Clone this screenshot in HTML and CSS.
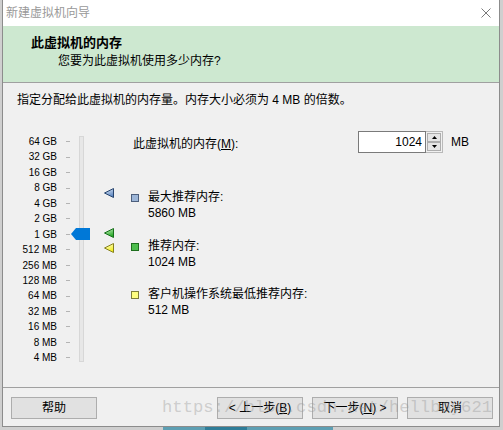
FILE: index.html
```html
<!DOCTYPE html>
<html lang="zh-CN">
<head>
<meta charset="utf-8">
<title>新建虚拟机向导</title>
<link rel="stylesheet" href="styles.css">
</head>
<body>
<div class="window">
  <div class="titlebar">
    <span class="title">新建虚拟机向导</span>
    <svg class="close" width="10" height="10" viewBox="0 0 10 10"><path d="M0.5 0.5 L9.5 9.5 M9.5 0.5 L0.5 9.5" stroke="#7a7a7a" stroke-width="1" fill="none"/></svg>
  </div>
  <div class="header">
    <div class="h-title">此虚拟机的内存</div>
    <div class="h-sub">您要为此虚拟机使用多少内存?</div>
  </div>
  <div class="content">
    <p class="intro">指定分配给此虚拟机的内存量。内存大小必须为 4 MB 的倍数。</p>
    <div class="main">
      <ul class="labels">
        <li>64 GB</li><li>32 GB</li><li>16 GB</li><li>8 GB</li><li>4 GB</li><li>2 GB</li><li>1 GB</li>
        <li>512 MB</li><li>256 MB</li><li>128 MB</li><li>64 MB</li><li>32 MB</li><li>16 MB</li><li>8 MB</li><li>4 MB</li>
      </ul>
      <div class="ticks">
        <span></span><span></span><span></span><span></span><span></span><span></span><span></span><span></span>
        <span></span><span></span><span></span><span></span><span></span><span></span><span></span>
      </div>
      <div class="track-wrap">
        <div class="track"></div>
        <svg class="thumb" width="19" height="12" viewBox="0 0 19 12"><polygon points="0,6 5,0 19,0 19,12 5,12" fill="#0078d7"/></svg>
      </div>
      <div class="markers">
        <svg class="marker m-max" width="10" height="10" viewBox="0 0 10 10">
          <defs><linearGradient id="gb" x1="0" y1="0" x2="0.4" y2="1"><stop offset="0" stop-color="#e4eefa"/><stop offset="1" stop-color="#5f88c2"/></linearGradient></defs>
          <polygon points="0.5,5 9.5,0.5 9.5,9.5" fill="url(#gb)" stroke="#27446f" stroke-width="1"/>
        </svg>
        <svg class="marker m-rec" width="10" height="10" viewBox="0 0 10 10">
          <defs><linearGradient id="gg" x1="0" y1="0" x2="0.4" y2="1"><stop offset="0" stop-color="#d4f7cc"/><stop offset="1" stop-color="#27a827"/></linearGradient></defs>
          <polygon points="0.5,5 9.5,0.5 9.5,9.5" fill="url(#gg)" stroke="#16701a" stroke-width="1"/>
        </svg>
        <svg class="marker m-min" width="10" height="10" viewBox="0 0 10 10">
          <defs><linearGradient id="gy" x1="0" y1="0" x2="0.4" y2="1"><stop offset="0" stop-color="#ffffe0"/><stop offset="1" stop-color="#f2ee1e"/></linearGradient></defs>
          <polygon points="0.5,5 9.5,0.5 9.5,9.5" fill="url(#gy)" stroke="#85801e" stroke-width="1"/>
        </svg>
      </div>
      <div class="settings">
        <div class="mem-row">
          <span class="mem-label">此虚拟机的内存(<u>M</u>):</span>
          <div class="spinner">
            <div class="field">1024</div>
            <div class="spin">
              <div class="spin-btn"><svg width="5" height="3" viewBox="0 0 5 3"><polygon points="2.5,0 5,3 0,3" fill="#000"/></svg></div>
              <div class="spin-btn"><svg width="5" height="3" viewBox="0 0 5 3"><polygon points="0,0 5,0 2.5,3" fill="#000"/></svg></div>
            </div>
          </div>
          <span class="unit">MB</span>
        </div>
        <div class="legend lg-max">
          <span class="sq sq-blue"></span>
          <div class="lg-text"><div>最大推荐内存:</div><div>5860 MB</div></div>
        </div>
        <div class="legend lg-rec">
          <span class="sq sq-green"></span>
          <div class="lg-text"><div>推荐内存:</div><div>1024 MB</div></div>
        </div>
        <div class="legend lg-min">
          <span class="sq sq-yellow"></span>
          <div class="lg-text"><div>客户机操作系统最低推荐内存:</div><div>512 MB</div></div>
        </div>
      </div>
    </div>
  </div>
  <div class="footer">
    <button class="btn">帮助</button>
    <div class="nav">
      <button class="btn">&lt; 上一步(<u>B</u>)</button>
      <button class="btn">下一步(<u>N</u>) &gt;</button>
      <button class="btn">取消</button>
    </div>
  </div>
</div>
<div class="desk"><span class="d1"></span><span class="d2"></span><span class="d3"></span></div>
<div class="watermark">https://blog.csdn.net/hellboy621</div>
</body>
</html>
```
FILE: styles.css
```css
* { box-sizing: border-box; margin: 0; padding: 0; }

html, body {
  width: 503px;
  height: 430px;
  overflow: hidden;
}

body {
  position: relative;
  background: #cfcfcf;
  padding-left: 2px;
  font-family: "Liberation Sans", "Noto Sans CJK SC", sans-serif;
  font-size: 12px;
  color: #000;
}

.window {
  width: 498px;
  height: 427px;
  border: 1px solid #8c8c8c;
  border-top: none;
  background: #f0f0f0;
  display: flex;
  flex-direction: column;
}

.titlebar {
  height: 26px;
  flex: none;
  background: #fff;
  display: flex;
  align-items: center;
  justify-content: space-between;
  padding: 0 8px 0 3px;
  color: #999;
  line-height: 26px;
}

.close { display: block; }

.header {
  height: 57px;
  flex: none;
  background: #cde8d0;
  border-bottom: 1px solid #a0a0a0;
  padding: 8px 0 0 28px;
}

.h-title {
  font-size: 13px;
  font-weight: bold;
  line-height: 17px;
}

.h-sub {
  margin: 2px 0 0 27px;
  line-height: 16px;
}

.content {
  height: 304px;
  flex: none;
  padding: 9px 0 0 14px;
}

.intro { line-height: 16px; }

.main {
  margin-top: 23px;
  display: flex;
  align-items: flex-start;
}

.labels {
  list-style: none;
  width: 40px;
  padding-top: 3px;
  text-align: right;
  font-size: 10px;
}

.labels li {
  height: 15.45px;
  line-height: 15.45px;
  white-space: nowrap;
}

.ticks {
  margin-left: 9px;
  width: 4px;
  padding-top: 3px;
}

.ticks span {
  display: block;
  height: 15.45px;
  background: linear-gradient(#b4b4b4, #b4b4b4) center / 100% 1px no-repeat;
}

.track-wrap {
  position: relative;
  margin-left: 1px;
  width: 20px;
  height: 236px;
}

.track {
  margin: 5px 0 0 8px;
  width: 5px;
  height: 226px;
  border: 1px solid #d7d7d7;
  background: #e7e7e7;
}

.thumb {
  position: absolute;
  left: 0;
  top: 97px;
}

.markers {
  position: relative;
  margin-left: 13px;
  width: 10px;
  height: 236px;
}

.marker {
  position: absolute;
  left: 0;
}

.m-max { top: 57px; }
.m-rec { top: 97px; }
.m-min { top: 112px; }

.settings {
  margin-left: 17px;
  width: 344px;
}

.mem-row {
  display: flex;
  align-items: center;
  height: 22px;
}

.mem-label {
  flex: 1;
  padding-left: 2px;
}

.spinner { display: flex; }

.field {
  width: 68px;
  height: 22px;
  border: 1px solid #7a7a7a;
  background: #fff;
  text-align: right;
  padding-right: 3px;
  line-height: 20px;
}

.spin {
  width: 17px;
  height: 22px;
  border: 1px solid #b9b9b9;
  border-left: none;
  background: #f0f0f0;
  display: flex;
  flex-direction: column;
  padding: 1px;
}

.spin-btn {
  flex: 1;
  border: 1px solid #adadad;
  background: #e5e5e5;
  display: flex;
  align-items: center;
  justify-content: center;
}

.spin-btn svg { display: block; }

.unit {
  margin-left: 8px;
  width: 24px;
}

.legend {
  display: flex;
  align-items: flex-start;
}

.lg-max { margin-top: 36px; }
.lg-rec { margin-top: 17px; }
.lg-min { margin-top: 16px; }

.lg-text { margin-left: 9px; line-height: 16px; }

.sq {
  width: 8px;
  height: 8px;
  margin-top: 5px;
  border: 1px solid;
  flex: none;
}

.sq-blue { background: #9db6d8; border-color: #4d5f7d; }
.sq-green { background: #4dbd4d; border-color: #1e6e1e; }
.sq-yellow { background: #ffff80; border-color: #7f7f3a; }

.footer {
  flex: 1;
  border-top: 1px solid #a0a0a0;
  padding: 9px 6px 0 8px;
  display: flex;
  align-items: flex-start;
  justify-content: space-between;
}

.nav {
  display: flex;
  gap: 9px;
}

.btn {
  width: 86px;
  height: 22px;
  border: 1px solid #adadad;
  background: #e1e1e1;
  font-family: "Liberation Sans", "Noto Sans CJK SC", sans-serif;
  font-size: 12px;
  line-height: 20px;
  color: #000;
  text-align: center;
}

.desk {
  display: flex;
  height: 3px;
  margin-left: 161px;
}

.desk span { display: block; height: 3px; }
.d1 { width: 42px; background: #5d9fb3; }
.d2 { width: 42px; background: #2f7d98; }
.d3 { width: 86px; background: #5d9fb3; }

.watermark {
  position: absolute;
  left: 162px;
  top: 397px;
  font-family: "Liberation Mono", monospace;
  font-size: 17.2px;
  line-height: 22px;
  color: rgba(150, 150, 150, 0.4);
  pointer-events: none;
  white-space: nowrap;
}
```
